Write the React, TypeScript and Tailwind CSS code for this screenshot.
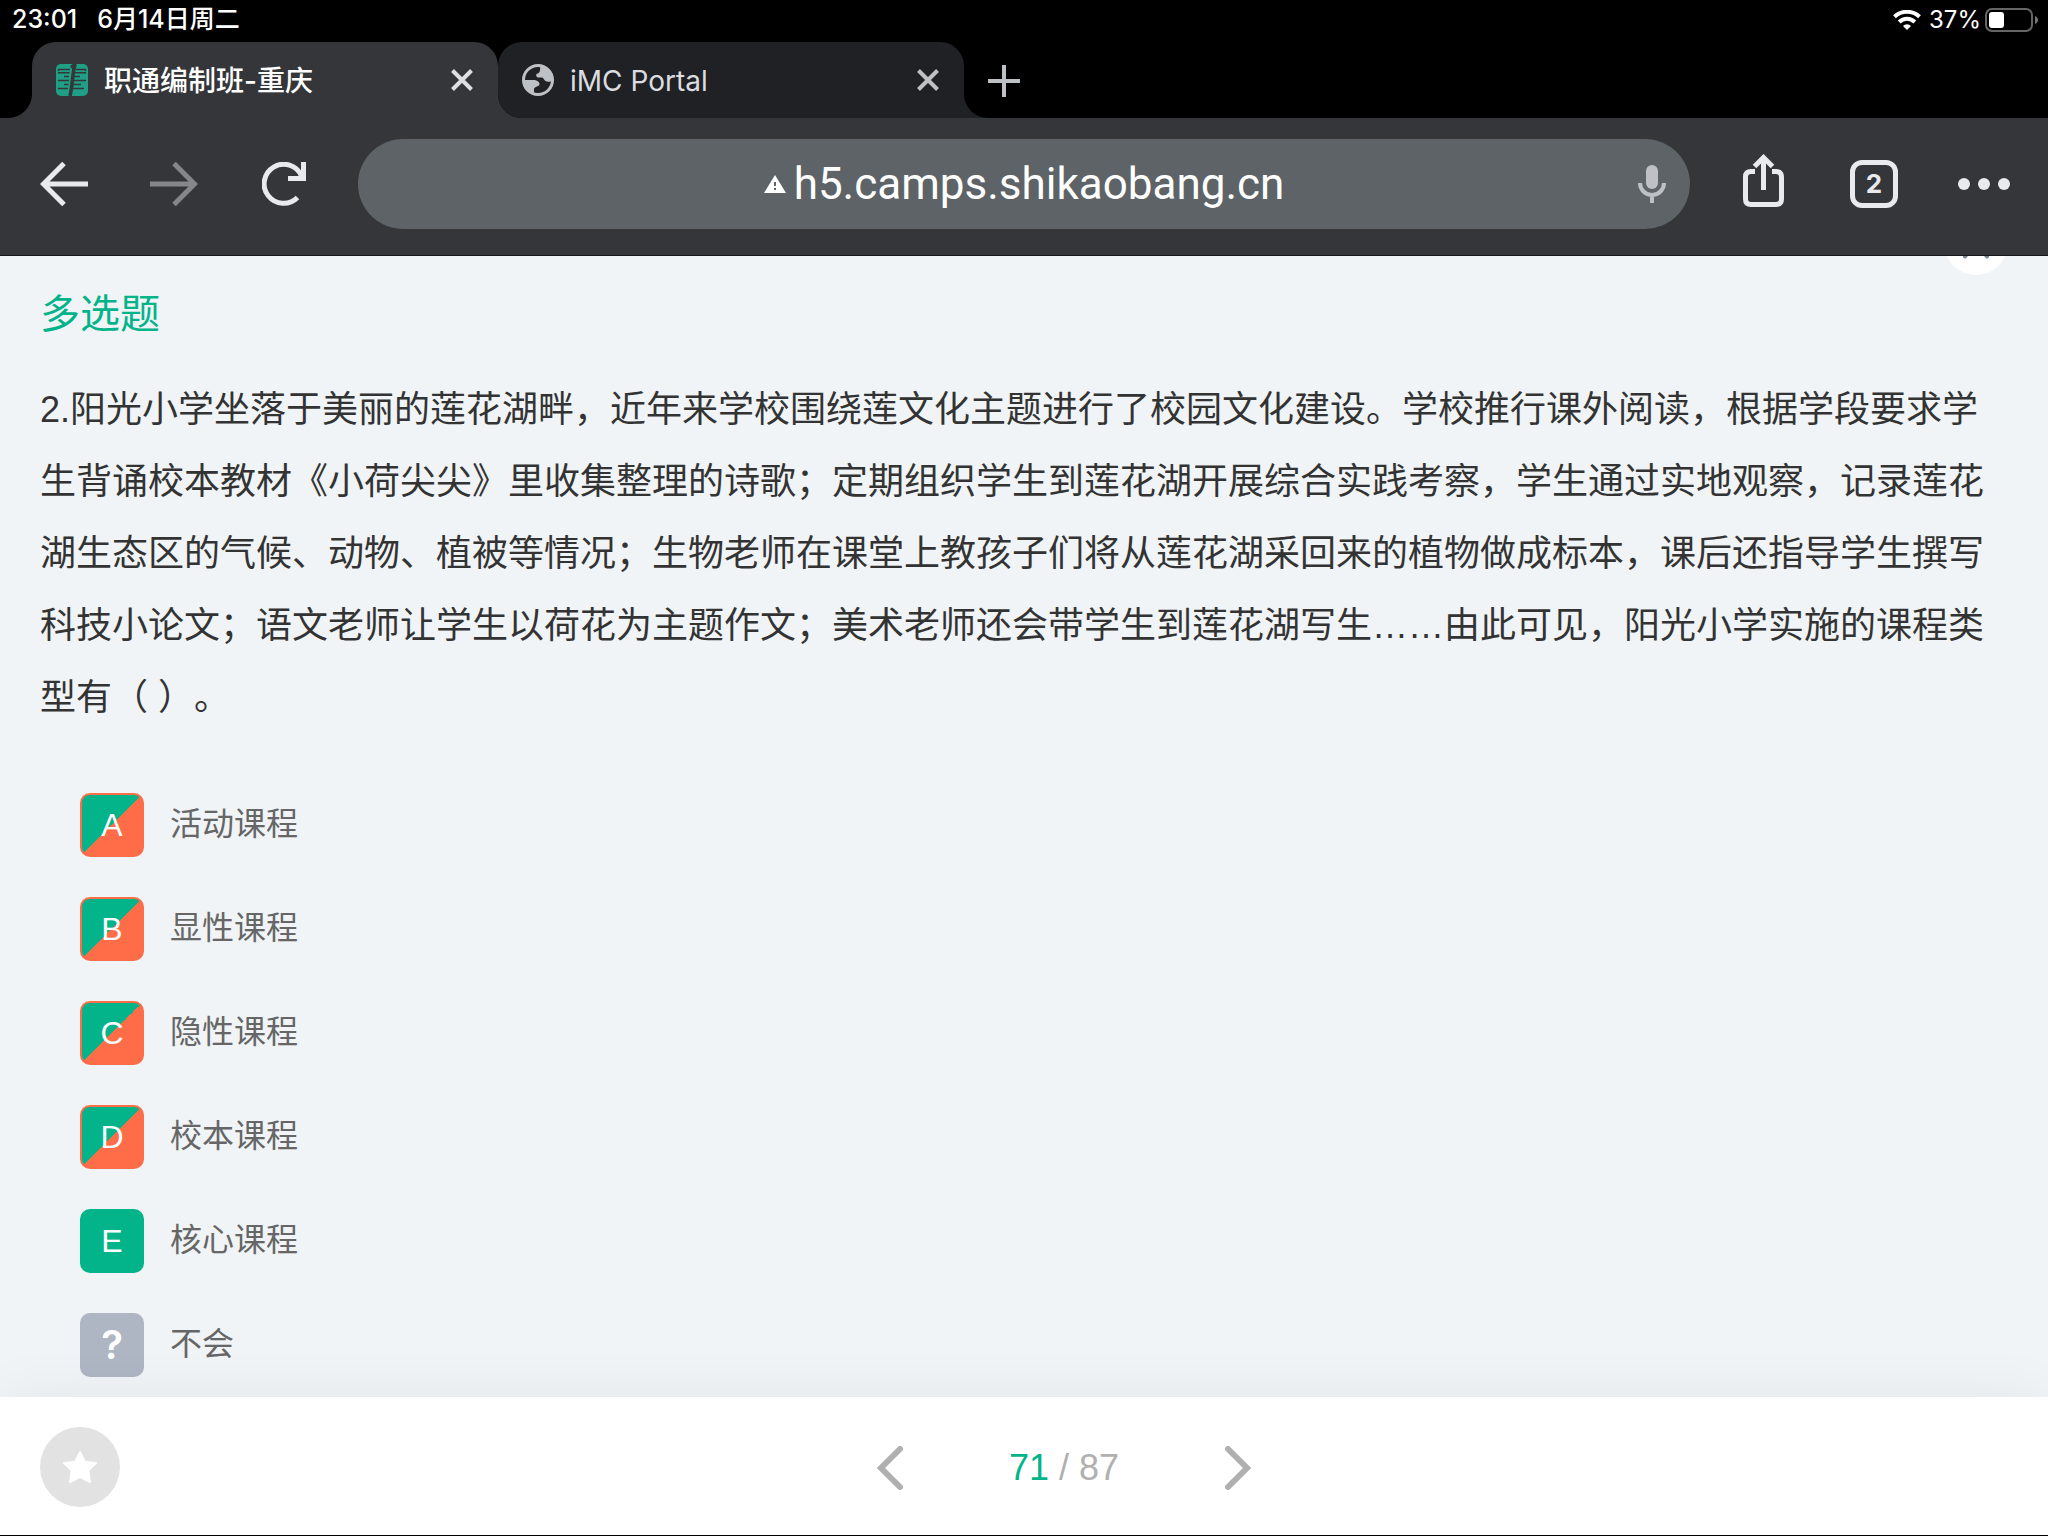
import { useState } from "react";

type Result = "missed" | "correct" | "unsure";

interface Option {
  key: string;
  text: string;
  result: Result;
}

const OPTIONS: Option[] = [
  { key: "A", text: "活动课程", result: "missed" },
  { key: "B", text: "显性课程", result: "missed" },
  { key: "C", text: "隐性课程", result: "missed" },
  { key: "D", text: "校本课程", result: "missed" },
  { key: "E", text: "核心课程", result: "correct" },
  { key: "?", text: "不会", result: "unsure" },
];

const BADGE: Record<Result, string> = {
  missed: "border-2 border-[#ff6c48] bg-[linear-gradient(135deg,#03b389_50%,#ff6c48_50%)] text-[32px]",
  correct: "bg-[#03b389] text-[32px]",
  unsure: "bg-[#aeb6c3] font-['Inter',sans-serif] text-[40px] font-semibold",
};

const QUESTION =
  "2.阳光小学坐落于美丽的莲花湖畔，近年来学校围绕莲文化主题进行了校园文化建设。学校推行课外阅读，根据学段要求学生背诵校本教材《小荷尖尖》里收集整理的诗歌；定期组织学生到莲花湖开展综合实践考察，学生通过实地观察，记录莲花湖生态区的气候、动物、植被等情况；生物老师在课堂上教孩子们将从莲花湖采回来的植物做成标本，课后还指导学生撰写科技小论文；语文老师让学生以荷花为主题作文；美术老师还会带学生到莲花湖写生……由此可见，阳光小学实施的课程类型有（ ）。";

function Flare({ className }: { className: string }) {
  return (
    <svg className={className} viewBox="0 0 24 24" fill="currentColor">
      <path d="M24 0V24H0A24 24 0 0 0 24 0Z" />
    </svg>
  );
}

function CloseIcon() {
  return (
    <svg className="w-[22px] h-[22px]" viewBox="0 0 22 22" fill="none" stroke="currentColor" strokeWidth="4">
      <path d="M1.5 1.5 20.5 20.5M20.5 1.5 1.5 20.5" />
    </svg>
  );
}

function StatusBar() {
  return (
    <div className="flex items-center justify-between h-[42px] pb-[2px] pl-3 pr-[10px] text-white">
      <div className="flex gap-5 text-[25px] font-medium">
        <span>23:01</span>
        <span>6月14日周二</span>
      </div>
      <div className="flex items-center gap-1 text-2xl">
        <svg className="w-7 h-5 mr-1" viewBox="0 0 28 20" fill="none" stroke="#fff" strokeWidth="4">
          <path d="M1.5 6.8A18 18 0 0 1 26.500 6.800" />
          <path d="M6.200 12A11 11 0 0 1 21.800 12" />
          <path d="M14 20 10 16A5.700 5.700 0 0 1 18 16Z" fill="#fff" stroke="none" />
        </svg>
        <span>37%</span>
        <svg className="w-[53px] h-6" viewBox="0 0 53 24">
          <rect x="1" y="1" width="46" height="22" rx="6" fill="none" stroke="#666" strokeWidth="2" />
          <rect x="4" y="4" width="15" height="16" rx="3" fill="#fff" />
          <path d="M50 8C54 9.500 54 14.500 50 16Z" fill="#777" />
        </svg>
      </div>
    </div>
  );
}

function TabStrip() {
  return (
    <div className="flex items-end h-[76px] pl-2 text-[28px]">
      <Flare className="w-6 h-6 text-[#35363a]" />
      <div className="flex items-center w-[466px] h-full rounded-t-3xl bg-[#35363a] pl-6 pr-[25px] text-white">
        <svg className="w-8 h-8 mr-4" viewBox="0 0 32 32">
          <rect width="32" height="32" rx="5" fill="#1f9f85" />
          <g stroke="#35363a" strokeWidth="1.5" fill="none">
            <path d="M2.500 7V5.500H14M20 5.500H29.500V7" />
            <path d="M2 8.800H13.500M19 8.800H30M8 12.500H13M18 12.500H24M2 16.500H13M18 16.500H30M8 20.500H12.500M17.500 20.500H25M2 24.500H12M17 24.500H28" />
            <path d="M20 0 15 3.500M19 1C16 10 17 20 14 32" strokeWidth="3.600" />
          </g>
        </svg>
        <span className="flex-1 pt-[2px] font-medium">职通编制班-重庆</span>
        <button aria-label="关闭标签页" className="text-[#dedfe3]">
          <CloseIcon />
        </button>
      </div>
      <div className="relative w-[466px] h-full">
        <Flare className="absolute left-0 bottom-0 w-6 h-6 -scale-x-100 text-[#35363a]" />
        <div className="relative flex items-center h-full rounded-t-3xl rounded-bl-3xl bg-[#202124] pl-6 pr-[25px] text-[#dcdde1]">
          <svg className="w-8 h-8 mr-4" viewBox="0 0 32 32">
            <circle cx="16" cy="16" r="14.500" fill="none" stroke="#bdc1c6" strokeWidth="3" />
            <path
              d="M18 2C25 2 31 9 30 16C29 18 27 18 25 17.500C22 17 22 14 20 13.500H16C14 13 13.500 10 15.500 9.500C18 9 18.500 6 18 2Z M2 16H11C15 16 17.500 18 17.500 20C17.500 23 12.500 22 12 25V30C5 29 1 22 2 16Z"
              fill="#bdc1c6"
            />
          </svg>
          <span className="flex-1 pt-[2px]">iMC Portal</span>
          <button aria-label="关闭标签页" className="text-[#bdc1c6]">
            <CloseIcon />
          </button>
        </div>
      </div>
      <Flare className="w-6 h-6 -scale-x-100 text-[#202124]" />
      <button aria-label="新标签页" className="self-center pt-[2px]">
        <svg className="w-8 h-8" viewBox="0 0 32 32" stroke="#bdc1c6" strokeWidth="4">
          <path d="M16 0V32M0 16H32" />
        </svg>
      </button>
    </div>
  );
}

function Toolbar() {
  return (
    <div className="flex items-center h-[138px] border-b border-[#17181b] bg-[#35363a] pl-10 pr-[38px] pb-[6px] text-[#e8eaed]">
      <button aria-label="后退">
        <svg className="w-12 h-11" viewBox="0 0 48 44" fill="none" stroke="currentColor" strokeWidth="5">
          <path d="M48 22H4M24 1.500 3.500 22 24 42.500" />
        </svg>
      </button>
      <button aria-label="前进" className="ml-[62px] text-[#858688]">
        <svg className="w-12 h-11" viewBox="0 0 48 44" fill="none" stroke="currentColor" strokeWidth="5">
          <path d="M0 22H44M24 1.500 44.500 22 24 42.500" />
        </svg>
      </button>
      <button aria-label="重新加载" className="ml-16">
        <svg className="w-11 h-11" viewBox="0 0 44 44" fill="none" stroke="currentColor" strokeWidth="5">
          <path d="M35.500 35.500A19.500 19.500 0 1 1 39.500 14" />
          <path d="M41.500 0V16.500H26" />
        </svg>
      </button>
      <div className="grid grid-cols-[1fr_auto_1fr] flex-1 items-center h-[90px] ml-[52px] rounded-full bg-[#5e6367] px-6 text-white">
        <span />
        <div className="flex items-center gap-2">
          <svg className="w-[22px] h-[18px]" viewBox="0 0 22 18">
            <path d="M11 0 22 18H0Z" fill="#fff" />
            <path d="M11 7V11M11 13V15" stroke="#5e6367" strokeWidth="2" />
          </svg>
          <input
            aria-label="地址栏"
            defaultValue="h5.camps.shikaobang.cn"
            className="field-sizing-content bg-transparent font-['Roboto',sans-serif] text-[44px] leading-[56px] outline-none"
          />
        </div>
        <button aria-label="语音搜索" className="justify-self-end text-[#bdc1c6]">
          <svg className="w-7 h-[38px]" viewBox="0 0 28 38" fill="none" stroke="currentColor" strokeWidth="4">
            <rect x="8" y="0" width="12" height="24" rx="6" fill="currentColor" stroke="none" />
            <path d="M2 18A12 12 0 0 0 26 18M14 30V38" />
          </svg>
        </button>
      </div>
      <button aria-label="分享" className="ml-[52px] pb-[6px]">
        <svg className="w-11 h-[54px]" viewBox="0 0 44 54" fill="none" stroke="currentColor" strokeWidth="5">
          <path d="M13 17.500H9Q3.500 17.500 3.500 23V45Q3.500 50.500 9 50.500H34Q39.500 50.500 39.500 45V23Q39.500 17.500 34 17.500H30" />
          <path d="M21.500 36V4M12.500 12.500 21.500 3.500 30.500 12.500" />
        </svg>
      </button>
      <button
        aria-label="2 个标签页"
        className="flex items-center justify-center w-12 h-12 ml-16 rounded-xl border-[5px] border-[#e8eaed] text-[26px] font-bold"
      >
        2
      </button>
      <button aria-label="更多" className="ml-[60px]">
        <svg className="w-[52px] h-3" viewBox="0 0 52 12" fill="currentColor">
          <circle cx="6" cy="6" r="6" />
          <circle cx="26" cy="6" r="6" />
          <circle cx="46" cy="6" r="6" />
        </svg>
      </button>
    </div>
  );
}

function OptionRow({ option }: { option: Option }) {
  return (
    <label className="flex items-center gap-[26px] w-fit cursor-pointer">
      <input type="checkbox" className="sr-only" />
      <span
        className={`flex items-center justify-center w-16 h-16 rounded-[10px] leading-none text-white ${BADGE[option.result]}`}
      >
        {option.key}
      </span>
      <span className="pb-[2px] text-[32px] leading-[48px] text-[#666]">{option.text}</span>
    </label>
  );
}

function Footer() {
  const [page, setPage] = useState(71);

  return (
    <footer className="relative flex items-center h-[139px] border-b border-black bg-white px-10 pt-[2px] shadow-[0_0_60px_rgba(0,0,0,0.06)]">
      <button aria-label="收藏" className="flex items-center justify-center w-20 h-20 rounded-full bg-[#e2e2e2]">
        <svg className="w-[34px] h-[34px]" viewBox="0 0 34 34" fill="#fff" stroke="#fff" strokeWidth="2" strokeLinejoin="round">
          <path d="M17 2 21.800 11.800 33 13 25.200 20.500 27 32 17 26.800 7 32 8.800 20.500 1 13 12.200 11.800Z" />
        </svg>
      </button>
      <div className="flex flex-1 items-center justify-center pt-[2px] text-4xl text-[#b0b0b0]">
        <button aria-label="上一题" onClick={() => setPage(Math.max(1, page - 1))}>
          <svg className="w-[26px] h-11" viewBox="0 0 26 44" fill="none" stroke="currentColor" strokeWidth="6" strokeLinecap="round">
            <path d="M23 3 4 22 23 41" />
          </svg>
        </button>
        <p className="px-[106px]">
          <span className="text-[#03b389]">{page}</span> / 87
        </p>
        <button aria-label="下一题" onClick={() => setPage(Math.min(87, page + 1))}>
          <svg className="w-[26px] h-11" viewBox="0 0 26 44" fill="none" stroke="currentColor" strokeWidth="6" strokeLinecap="round">
            <path d="M3 3 22 22 3 41" />
          </svg>
        </button>
      </div>
    </footer>
  );
}

export default function App() {
  return (
    <div className="flex flex-col min-h-screen bg-[#f0f4f7]">
      <header className="bg-black font-['Inter','Noto_Sans_CJK_SC',sans-serif]">
        <StatusBar />
        <TabStrip />
        <Toolbar />
      </header>

      <div className="flex flex-col flex-1 font-['Liberation_Sans','Noto_Sans_CJK_SC',sans-serif]">
        <main className="relative flex-1 overflow-hidden px-10 pt-[30px] pb-[19px]">
          {/* Floating button, scrolled mostly out of view */}
          <button
            aria-label="收起"
            className="absolute right-10 -top-[45px] flex items-end justify-center w-16 h-16 rounded-full bg-white pb-4"
          >
            <svg className="w-7 h-7" viewBox="0 0 28 28" fill="none" stroke="#7d8590" strokeWidth="4" strokeLinecap="round">
              <path d="M14 12 3 25.500M14 12 25 25.500" />
            </svg>
          </button>

          <h1 className="text-[40px] leading-[56px] text-[#03b389]">多选题</h1>
          <p className="mt-8 text-4xl leading-[72px] text-[#333] [text-spacing-trim:space-all]">{QUESTION}</p>

          <fieldset aria-label="选项" className="flex flex-col gap-10 mt-[59px] pl-10">
            {OPTIONS.map((option) => (
              <OptionRow key={option.key} option={option} />
            ))}
          </fieldset>
        </main>
        <Footer />
      </div>
    </div>
  );
}
